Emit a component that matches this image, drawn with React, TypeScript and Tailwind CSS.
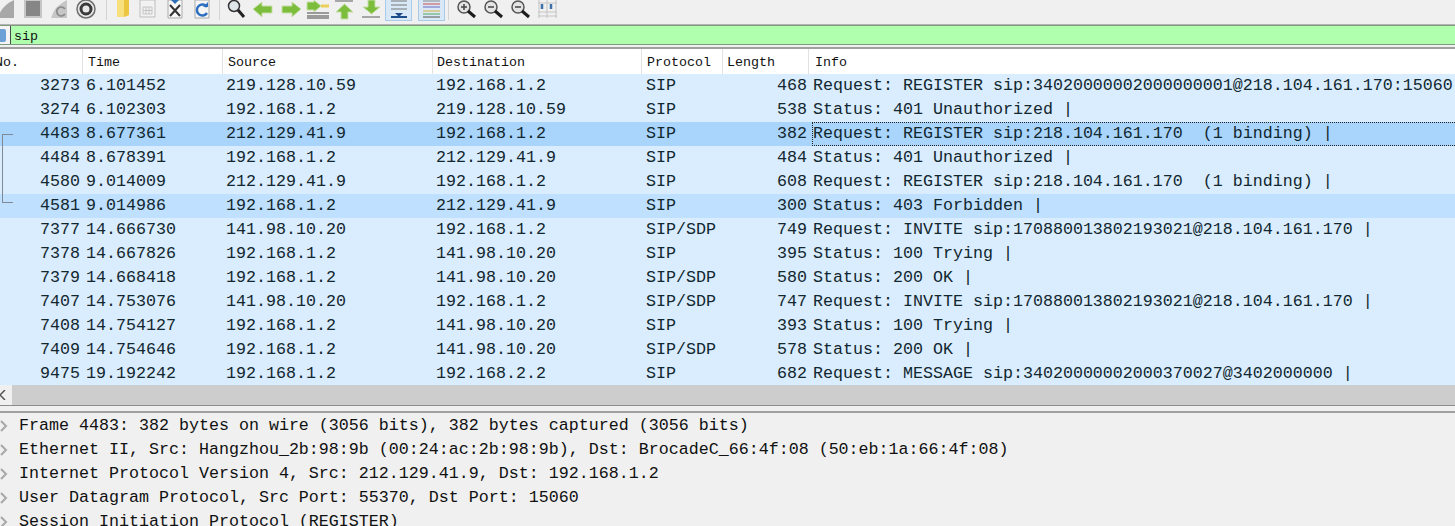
import type { ReactNode } from "react";

type Row = { no: string; time: string; src: string; dst: string; proto: string; len: string; info: string; bg?: string; focus?: boolean; mark?: string };

const rows: Row[] = [
  { no: "3273", time: "6.101452", src: "219.128.10.59", dst: "192.168.1.2", proto: "SIP", len: "468", info: "Request: REGISTER sip:34020000002000000001@218.104.161.170:15060" },
  { no: "3274", time: "6.102303", src: "192.168.1.2", dst: "219.128.10.59", proto: "SIP", len: "538", info: "Status: 401 Unauthorized |" },
  { no: "4483", time: "8.677361", src: "212.129.41.9", dst: "192.168.1.2", proto: "SIP", len: "382", info: "Request: REGISTER sip:218.104.161.170  (1 binding) |", bg: "bg-[#a9d5fd]", focus: true, mark: "top" },
  { no: "4484", time: "8.678391", src: "192.168.1.2", dst: "212.129.41.9", proto: "SIP", len: "484", info: "Status: 401 Unauthorized |", mark: "mid" },
  { no: "4580", time: "9.014009", src: "212.129.41.9", dst: "192.168.1.2", proto: "SIP", len: "608", info: "Request: REGISTER sip:218.104.161.170  (1 binding) |", mark: "mid" },
  { no: "4581", time: "9.014986", src: "192.168.1.2", dst: "212.129.41.9", proto: "SIP", len: "300", info: "Status: 403 Forbidden |", bg: "bg-[#bfe0fe]", mark: "end" },
  { no: "7377", time: "14.666730", src: "141.98.10.20", dst: "192.168.1.2", proto: "SIP/SDP", len: "749", info: "Request: INVITE sip:170880013802193021@218.104.161.170 |" },
  { no: "7378", time: "14.667826", src: "192.168.1.2", dst: "141.98.10.20", proto: "SIP", len: "395", info: "Status: 100 Trying |" },
  { no: "7379", time: "14.668418", src: "192.168.1.2", dst: "141.98.10.20", proto: "SIP/SDP", len: "580", info: "Status: 200 OK |" },
  { no: "7407", time: "14.753076", src: "141.98.10.20", dst: "192.168.1.2", proto: "SIP/SDP", len: "747", info: "Request: INVITE sip:170880013802193021@218.104.161.170 |" },
  { no: "7408", time: "14.754127", src: "192.168.1.2", dst: "141.98.10.20", proto: "SIP", len: "393", info: "Status: 100 Trying |" },
  { no: "7409", time: "14.754646", src: "192.168.1.2", dst: "141.98.10.20", proto: "SIP/SDP", len: "578", info: "Status: 200 OK |" },
  { no: "9475", time: "19.192242", src: "192.168.1.2", dst: "192.168.2.2", proto: "SIP", len: "682", info: "Request: MESSAGE sip:34020000002000370027@3402000000 |" },
];

const details = [
  "Frame 4483: 382 bytes on wire (3056 bits), 382 bytes captured (3056 bits)",
  "Ethernet II, Src: Hangzhou_2b:98:9b (00:24:ac:2b:98:9b), Dst: BrocadeC_66:4f:08 (50:eb:1a:66:4f:08)",
  "Internet Protocol Version 4, Src: 212.129.41.9, Dst: 192.168.1.2",
  "User Datagram Protocol, Src Port: 55370, Dst Port: 15060",
  "Session Initiation Protocol (REGISTER)",
];

const Ico = ({ children, w = 27 }: { children: ReactNode; w?: number }) => (
  <svg width={w} height="24" viewBox={`0 0 ${w} 24`} className="shrink-0">{children}</svg>
);

const Sep = () => <div className="w-px h-5 bg-[#d4d4d4] shrink-0 self-start" />;

function Zoom({ sign }: { sign: string }) {
  return (
    <Ico>
      <circle cx="11" cy="7" r="6" fill="#e4e4e4" stroke="#555" strokeWidth="1.500" />
      <path d="M15 11 L22 17" stroke="#1c1c1c" strokeWidth="3" />
      <path d="M8 7h6" stroke="#444" strokeWidth="1.500" />
      {sign === "plus" && <path d="M11 4v6" stroke="#444" strokeWidth="1.500" />}
    </Ico>
  );
}

function Toolbar() {
  return (
    <div className="h-[25px] bg-[#f0f0f0] border-b border-[#b4b4b4] flex items-start overflow-hidden -ml-[5px]">
      <Ico w={24}><path d="M3 18 Q6 6 19 0 V18 Z" fill="#a8a8a8" /></Ico>
      <Ico><rect x="6" y="0" width="16" height="17" fill="#868686" stroke="#c6c6c6" strokeWidth="2" /></Ico>
      <Ico><path d="M5 18 Q8 6 21 0 V18 Z" fill="#c6c6c6" /><path d="M19 9a4.500 4.500 0 1 0 0 5" fill="none" stroke="#8a8a8a" strokeWidth="1.700" /></Ico>
      <Ico><circle cx="13" cy="9" r="9" fill="#e8e8e8" stroke="#6e6e6e" strokeWidth="1.500" /><circle cx="13" cy="9" r="5" fill="none" stroke="#3a3a3a" strokeWidth="3" /></Ico>
      <div className="w-[6px] shrink-0" />
      <Sep />
      <Ico><path d="M10 0h12v15l-5 2h-7Z" fill="#f9e07e" /><path d="M17 0h5v15l-5 2Z" fill="#ecc640" /></Ico>
      <Ico><path d="M6 0h15v17H6Z" fill="#f2f2f2" stroke="#bdbdbd" /><path d="M9 7h9v7H9Z M12 7v7 M15 7v7 M9 10.500h9" fill="none" stroke="#c4c4c4" /></Ico>
      <Ico><path d="M7 0h14v18H7Z" fill="#f6f6f6" stroke="#aaa" /><path d="M9 5 L19 16 M19 5 L9 16" stroke="#333" strokeWidth="2" /><path d="M10 0h8l-4 4Z" fill="#2d6fb5" /></Ico>
      <Ico><path d="M7 0h14v18H7Z" fill="#f6f6f6" stroke="#aaa" /><path d="M19 7a5.500 5.500 0 1 0 0 6" fill="none" stroke="#2f6fc0" strokeWidth="2.500" /><path d="M15 7h5V2Z" fill="#2f6fc0" /></Ico>
      <div className="w-[4px] shrink-0" />
      <Sep />
      <div className="w-[3px] shrink-0" />
      <Ico><circle cx="11" cy="6" r="5.500" fill="#dfe6ea" stroke="#333" strokeWidth="1.500" /><path d="M15 10 L21 17" stroke="#222" strokeWidth="3" /></Ico>
      <Ico><path d="M3 9 L12 2 V6 H22 V13 H12 V17Z" fill="#7dbd3c" stroke="#c6dfa8" /></Ico>
      <Ico><path d="M24 9 L15 2 V6 H5 V13 H15 V17Z" fill="#7dbd3c" stroke="#c6dfa8" /></Ico>
      <Ico><path d="M17 6 L10 0 V2 H3 V10 H10 V12Z" fill="#7dbd3c" stroke="#c6dfa8" /><path d="M17 6h8" stroke="#eccf5a" strokeWidth="3" /><path d="M3 13h22M3 16h22M3 18h22" stroke="#444" /></Ico>
      <Ico><path d="M4 1h18" stroke="#a6a6a6" strokeWidth="2" /><path d="M13.500 4 L22 12 H17 V19 H10 V12 H5Z" fill="#7dbd3c" stroke="#c6dfa8" /></Ico>
      <Ico><path d="M13.500 14 L22 7 H17 V0 H10 V7 H5Z" fill="#7dbd3c" stroke="#c6dfa8" /><path d="M4 17h18" stroke="#a6a6a6" strokeWidth="2" /></Ico>
      <div className="w-[27px] h-[21px] shrink-0 bg-[#d8e8f7] border border-[#a9cbe8] border-t-0 flex items-center justify-center">
        <svg width="25" height="20" viewBox="0 0 25 20"><path d="M5 1h16M5 5h16M5 9h16" stroke="#777" /><path d="M5 17h16" stroke="#1f4e8c" strokeWidth="2" /><path d="M9 13h8l-4 4Z" fill="#1f4e8c" /></svg>
      </div>
      <div className="w-[6px] shrink-0" />
      <div className="w-[27px] h-[21px] shrink-0 bg-[#d8e8f7] border border-[#a9cbe8] border-t-0 flex items-center justify-center">
        <svg width="25" height="20" viewBox="0 0 25 20"><path d="M4 1h17" stroke="#888" /><path d="M4 4h17" stroke="#c94a4a" /><path d="M4 7h17" stroke="#6a6ac0" /><path d="M4 11h17" stroke="#d8b13c" /><path d="M4 14h17" stroke="#5aa35a" /><path d="M4 17h17" stroke="#555" /></svg>
      </div>
      <div className="w-[3px] shrink-0" />
      <Sep />
      <div className="w-[4px] shrink-0" />
      <Zoom sign="plus" />
      <Zoom sign="minus" />
      <Zoom sign="one" />
      <Ico><path d="M5 0v18M13 0v18M22 0v18M4 3h19M4 12h19M4 16h19" stroke="#c4c4c4" /><path d="M8 4v5M17 4v5" stroke="#3f6fa8" strokeWidth="2.500" /></Ico>
    </div>
  );
}

function Marker({ kind }: { kind?: string }) {
  if (!kind) return null;
  return (
    <div className="absolute left-[2px] top-0 bottom-0 w-[11px]">
      {kind === "top" && <div className="absolute left-0 right-0 top-[12px] bottom-0 border-l border-t border-[#7f8a96]" />}
      {kind === "mid" && <div className="absolute left-0 top-0 bottom-0 border-l border-[#7f8a96]" />}
      {kind === "end" && <div className="absolute left-0 right-0 top-0 h-[9px] border-l border-b border-[#7f8a96]" />}
    </div>
  );
}

export default function App() {
  const mono = "font-['Liberation_Mono','DejaVu_Sans_Mono',monospace]";
  return (
    <div className={`w-[1455px] h-[526px] overflow-hidden bg-[#f0f0f0] ${mono}`}>
      <Toolbar />
      {/* display filter */}
      <div className="h-[20px] bg-[#afffaf] border-y border-[#7f9a7f] flex items-center">
        <div className="w-[10px] h-full bg-[#f4f4f4] shrink-0 flex items-center">
          <div className="w-[6px] h-[13px] bg-[#6ea0d8] rounded-r-[2px]" />
        </div>
        <div className="w-px h-full bg-[#4a4a4a] shrink-0" />
        <span className="ml-[3px] pt-[3px] text-[13.330px] text-[#111]">sip</span>
      </div>
      <div className="h-[2px] mt-[2px] bg-[#a0a0a0]" />

      {/* packet list */}
      <div className="h-[25px] overflow-hidden bg-white flex text-[13.330px] text-[#111] leading-[27px]">
        <div className="w-[83px] border-r border-[#e2e2e2] -indent-[5px] shrink-0">No.</div>
        <div className="w-[140px] border-r border-[#e2e2e2] pl-[5px] shrink-0">Time</div>
        <div className="w-[210px] border-r border-[#e2e2e2] pl-[5px] shrink-0">Source</div>
        <div className="w-[209px] border-r border-[#e2e2e2] pl-[4px] shrink-0">Destination</div>
        <div className="w-[81px] border-r border-[#e2e2e2] pl-[5px] shrink-0">Protocol</div>
        <div className="w-[86px] border-r border-[#e2e2e2] pl-[4px] shrink-0">Length</div>
        <div className="pl-[6px]">Info</div>
      </div>
      <div className="h-[311px] overflow-hidden text-[16.670px] leading-[24px] text-[#12272e]">
        {rows.map((r) => (
          <div key={r.no} className={`relative h-[24px] flex whitespace-pre ${r.bg ?? "bg-[#d9edff]"}`}>
            <Marker kind={r.mark} />
            <div className="w-[80px] text-right shrink-0">{r.no}</div>
            <div className="w-[146px] pl-[6px] shrink-0">{r.time}</div>
            <div className="w-[210px] shrink-0">{r.src}</div>
            <div className="w-[210px] shrink-0">{r.dst}</div>
            <div className="w-[70px] shrink-0">{r.proto}</div>
            <div className="w-[91px] text-right shrink-0">{r.len}</div>
            <div className={`ml-[5px] grow ${r.focus ? "border-y border-l border-dotted border-[#222] leading-[22px]" : "pl-px"}`}>{r.info}</div>
          </div>
        ))}
      </div>

      {/* horizontal scrollbar */}
      <div className="h-[21px] flex bg-[#cdcdcd] border-b border-[#8c8c8c]">
        <div className="w-3 bg-[#f0f0f0] flex items-center">
          <svg width="6" height="10" viewBox="0 0 6 10"><path d="M5 0 L0 5 L5 10" fill="none" stroke="#555" strokeWidth="1.500" /></svg>
        </div>
      </div>
      <div className="h-[5px]" />
      <div className="h-[2px] bg-[#a0a0a0]" />

      {/* packet details */}
      <div className="text-[16.670px] leading-[24px] text-[#111] mt-px">
        {details.map((d) => (
          <div key={d} className="h-[24px] flex whitespace-pre">
            <div className="w-[16px] shrink-0 flex items-center">
              <svg width="8" height="12" viewBox="0 0 8 12"><path d="M1 1l5 5-5 5" fill="none" stroke="#a8a8a8" strokeWidth="2" /></svg>
            </div>
            <div className="pl-[3px]">{d}</div>
          </div>
        ))}
      </div>
    </div>
  );
}
